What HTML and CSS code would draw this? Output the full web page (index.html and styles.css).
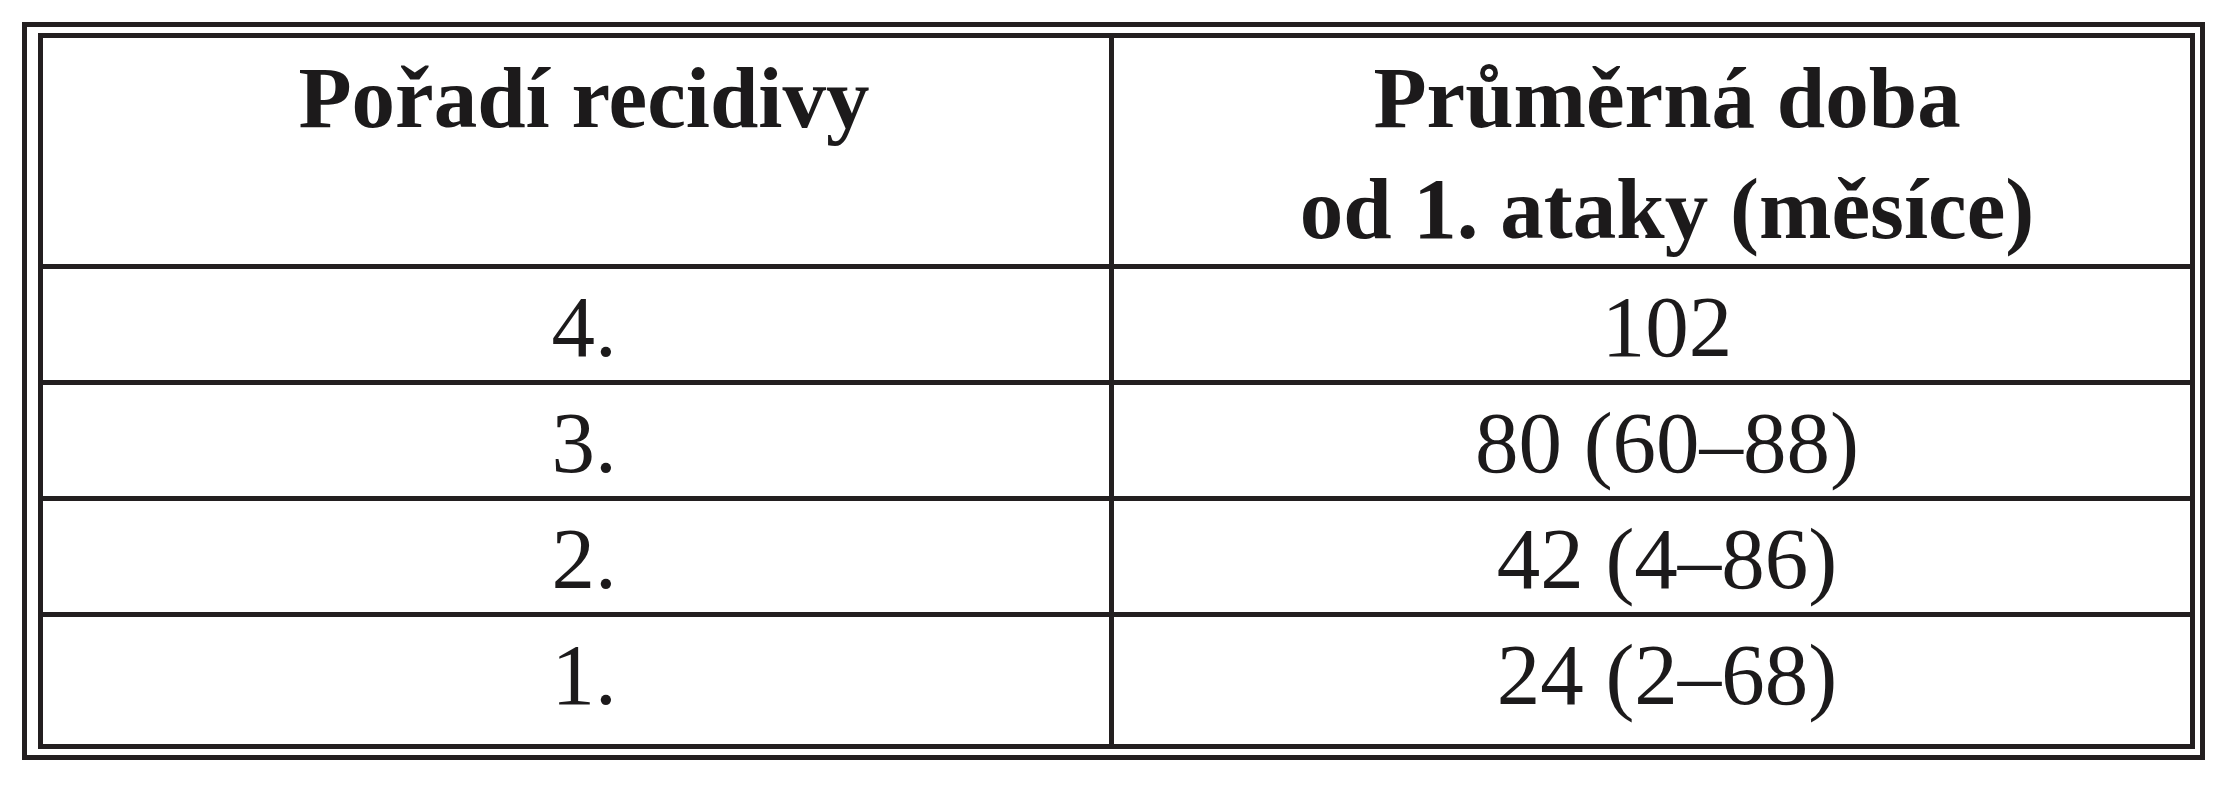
FILE: index.html
```html
<!DOCTYPE html>
<html lang="cs">
<head>
<meta charset="utf-8">
<title>Pořadí recidivy</title>
<link rel="stylesheet" href="styles.css">
</head>
<body>
<div class="frame">
  <div class="tbl">
    <div class="cell c1 head">Pořadí recidivy</div>
    <div class="cell c2 head">Průměrná doba<br>od 1. ataky (měsíce)</div>
    <div class="cell c1">4.</div>
    <div class="cell c2">102</div>
    <div class="cell c1">3.</div>
    <div class="cell c2">80 (60–88)</div>
    <div class="cell c1">2.</div>
    <div class="cell c2">42 (4–86)</div>
    <div class="cell c1 last">1.</div>
    <div class="cell c2 last">24 (2–68)</div>
  </div>
</div>
</body>
</html>
```
FILE: styles.css
```css
html, body {
  margin: 0;
  padding: 0;
  background: #ffffff;
}

body {
  padding: 22px 0 0 22px;
  font-family: "Liberation Serif", "Times New Roman", serif;
  color: #1c1a1b;
}

.frame {
  width: fit-content;
  border: 5px solid #231f20;
  padding: 6px 5px 6px 11px;
}

.tbl {
  display: grid;
  grid-template-columns: 1071px 1076px;
  grid-template-rows: 231px 116px 116px 116px 127px;
  border: 5px solid #231f20;
}

.cell {
  box-sizing: border-box;
  font-size: 87px;
  line-height: 107px;
  padding-top: 4px;
  text-align: center;
  white-space: nowrap;
  border-bottom: 5px solid #231f20;
}

.cell.last {
  border-bottom: none;
}

.c1 {
  border-right: 5px solid #231f20;
  padding-left: 16px;
}

.c2 {
  padding-left: 30px;
}

.head {
  font-weight: bold;
  line-height: 111px;
  padding-top: 4px;
}
```
